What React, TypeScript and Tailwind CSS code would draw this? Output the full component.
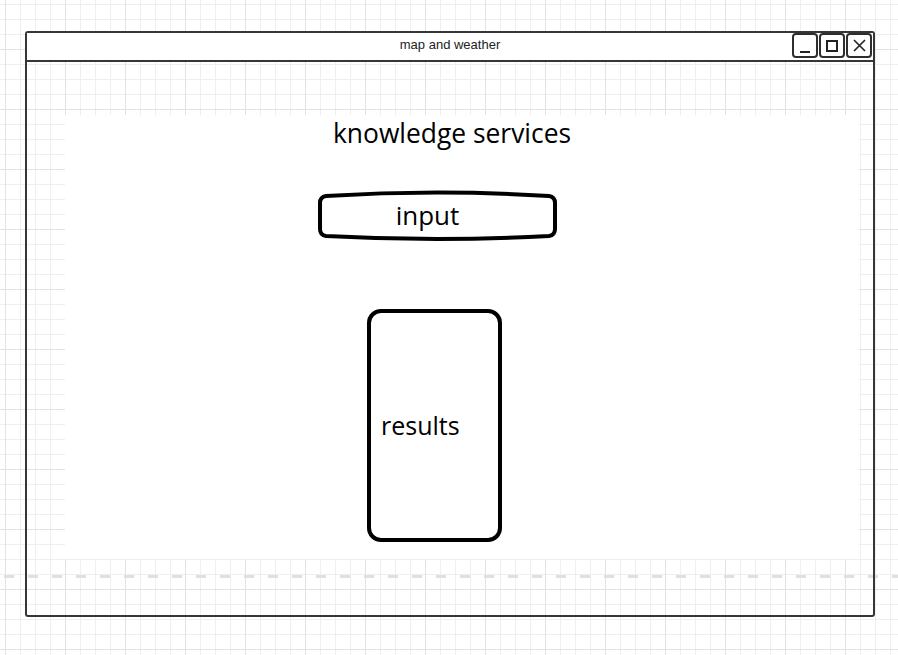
import React from "react";

const gridBg =
  "bg-[linear-gradient(to_right,#e2e2e2_1px,transparent_1px),linear-gradient(to_bottom,#e2e2e2_1px,transparent_1px),linear-gradient(to_right,#efefef_1px,transparent_1px),linear-gradient(to_bottom,#efefef_1px,transparent_1px)] bg-[size:60px_60px,60px_60px,15px_15px,15px_15px] bg-[position:5px_49px,5px_49px,5px_4px,5px_4px]";

const WindowButton = ({ children }: { children: React.ReactNode }) => (
  <div className="flex h-[25px] w-[26px] items-center justify-center rounded-[4px] border-2 border-[#2e2e2e] bg-white">
    {children}
  </div>
);

const InputShape = () => (
  <div className="relative h-[49px] w-[239px]">
    <svg className="absolute inset-0 overflow-visible" width="239" height="49" viewBox="0 0 239 49">
      <path
        d="M 8 5 Q 119 -2 231 5 Q 237 6 237 12 L 237 38 Q 237 44 231 45 Q 119 51 8 45 Q 2 44 2 38 L 2 12 Q 2 6 8 5 Z"
        fill="white"
        stroke="black"
        strokeWidth="4"
      />
    </svg>
    <div className="relative flex h-full items-center justify-center pb-[2px] pr-[20px] text-[26px] leading-none text-black">
      input
    </div>
  </div>
);

export default function App() {
  return (
    <div
      className={`relative min-h-[655px] w-[898px] bg-white ${gridBg}`}
      style={{ fontFamily: '"Open Sans", "Noto Sans", sans-serif' }}
    >
      {/* page break line */}
      <div className="absolute left-0 right-0 top-[575px] h-[3px] bg-[repeating-linear-gradient(to_right,transparent_0_4px,#e0e0e0_4px_14px,transparent_14px_24px)]" />

      <div className="relative pl-[25px] pt-[31px]">
        <div className="flex h-[586px] w-[850px] flex-col rounded-[3px] border-2 border-[#363636]">
          {/* title bar */}
          <div className="grid h-[29px] grid-cols-[1fr_auto_1fr] border-b-2 border-[#363636] bg-white">
            <div />
            <div
              className="self-center pb-[3px] text-[13px] text-[#222]"
              style={{ fontFamily: '"Liberation Sans", Arial, sans-serif' }}
            >
              map and weather
            </div>
            <div className="flex items-start justify-end gap-[1px] pr-[1px]">
              <WindowButton>
                <div className="ml-[-1px] mt-[12px] h-[2px] w-[10px] bg-[#222]" />
              </WindowButton>
              <WindowButton>
                <div className="h-[12px] w-[12px] border-2 border-[#222]" />
              </WindowButton>
              <WindowButton>
                <svg width="13" height="13" viewBox="0 0 13 13">
                  <path d="M1 1 L12 12 M12 1 L1 12" stroke="#222" strokeWidth="1.6" />
                </svg>
              </WindowButton>
            </div>
          </div>

          {/* body */}
          <div className="pl-[38px] pt-[53px]">
            <div className="flex h-[444px] w-[794px] flex-col bg-white">
              <div className="mt-[2px] pr-[20px] text-center text-[26.4px] leading-[32px] text-black">
                knowledge services
              </div>
              <div className="ml-[253px] mt-[42px]">
                <InputShape />
              </div>
              <div className="ml-[302px] mt-[69px] flex h-[233px] w-[135px] items-center rounded-[14px] border-4 border-black pl-[10px] text-[25px] text-black">
                results
              </div>
            </div>
          </div>
        </div>
      </div>
    </div>
  );
}
